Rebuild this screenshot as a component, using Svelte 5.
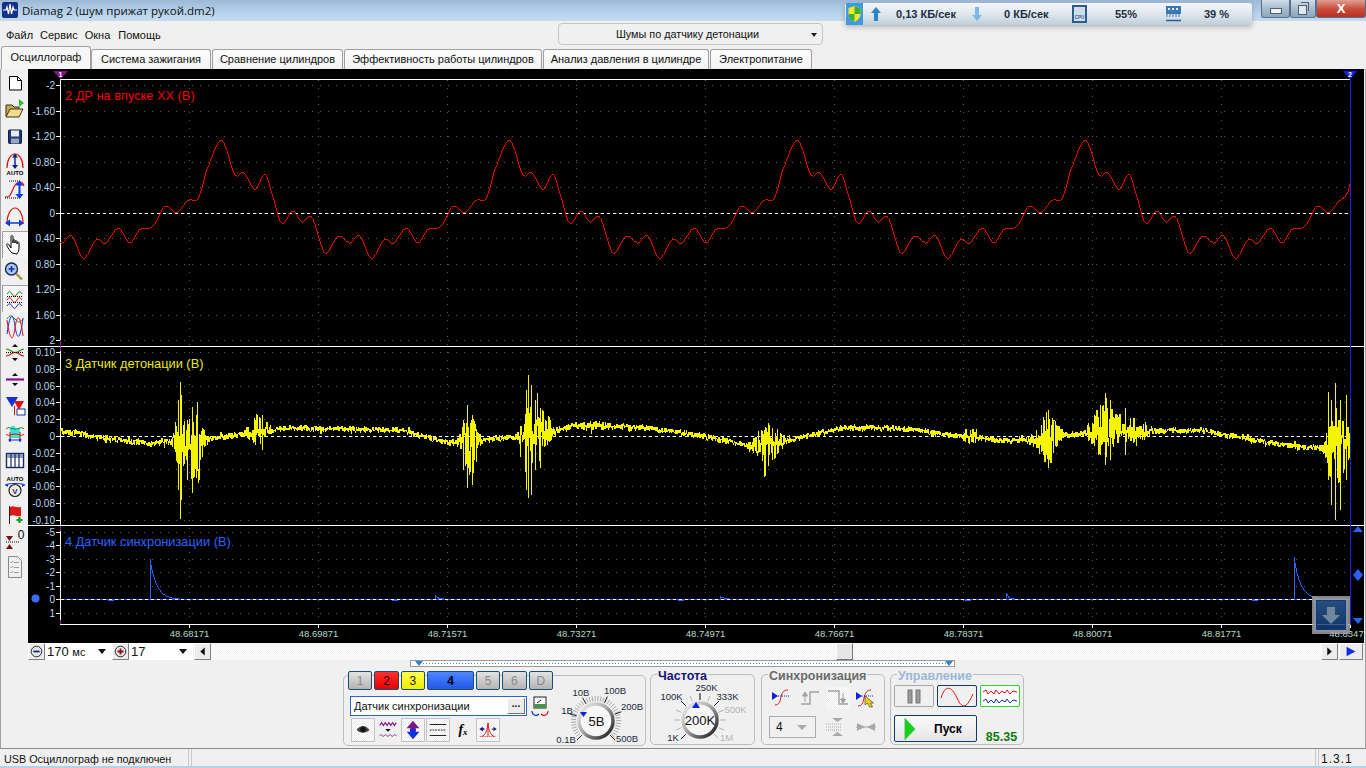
<script>
  const gridX = [189, 318, 447, 576, 705, 834, 963, 1092, 1221];
  const xLabels = ['48.68171','48.69871','48.71571','48.73271','48.74971','48.76671','48.78371','48.80071','48.81771','48.8347'];
  const t1 = ['-2','-1.60','-1.20','-0.80','-0.40','0','0.40','0.80','1.20','1.60','2'].map((l,i)=>({l,y:Math.round(85+i*25.5)}));
  const t2 = ['0.10','0.08','0.06','0.04','0.02','0','-0.02','-0.04','-0.06','-0.08','-0.10'].map((l,i)=>({l,y:Math.round(352+i*16.75)}));
  const t3 = ['-5','-4','-3','-2','-1','0','1'].map((l,i)=>({l,y:Math.round(531.5+i*13.5)}));
  const ticks = [...t1, ...t2, ...t3];

  const key = [[71.7,235.7],[83.3,258.3],[96.7,239.3],[105,243.3],[118.3,228.3],[130,242.7],[140,229.3],[153.3,226],[165,206],[176.7,212.3],[188.3,200],[198.3,198.3],[206.7,170],[220,140.7],[226.7,150],[233.3,171.7],[238,175.7],[243.3,172.3],[255,189],[265,174.3],[271.7,193.3],[281.7,223.3],[292.7,210.7],[301.7,221.7],[311.7,217.3],[325,252.7],[338.3,236],[350,242.7]];
  function cr(p0,p1,p2,p3,t){return 0.5*(2*p1+(p2-p0)*t+(2*p0-5*p1+4*p2-p3)*t*t+(3*p1-p0-3*p2+p3)*t*t*t);}
  function redY(x){
    const P=288; const n=key.length;
    let u=((x-71.7)%P+P)%P+71.7;
    let i=n-1;
    for(let k=0;k<n-1;k++){ if(u>=key[k][0]&&u<key[k+1][0]){i=k;break;} }
    const k0=key[(i-1+n)%n],k1=key[i],k2=key[(i+1)%n],k3=key[(i+2)%n];
    const x2=i===n-1?k2[0]+P:k2[0];
    const t=(u-k1[0])/(x2-k1[0]);
    return cr(k0[1],k1[1],k2[1],k3[1],t);
  }
  let red=''; for(let x=60;x<=1342;x++){ red+=`${x},${Math.round(redY(x))} `; }
  red+='1345,197 1348,192 1350,184';

  let seed=12345;
  function rnd(){ seed|=0; seed=seed+0x6D2B79F5|0; let t=Math.imul(seed^seed>>>15,1|seed); t=t+Math.imul(t^t>>>7,61|t)^t; return ((t^t>>>14)>>>0)/4294967296; }
  const cp=[[60,431],[150,444],[180,440],[215,438],[290,428],[400,430],[450,443],[480,441],[500,438],[530,436],[575,426],[640,427],[700,435],[750,446],[790,440],[840,428],[900,428],[960,436],[1010,441],[1050,437],[1100,432],[1200,430],[1260,441],[1310,448],[1350,445]];
  function center(x){ for(let i=0;i<cp.length-1;i++){ if(x<=cp[i+1][0]){ const a=cp[i],b=cp[i+1]; return a[1]+(b[1]-a[1])*(x-a[0])/(b[0]-a[0]); } } return 445; }
  const bursts=[[180,6,36,44],[192,12,28,42],[258,12,20,12],[470,9,30,38],[528,7,42,44],[540,12,28,30],[590,28,6,5],[768,15,20,22],[970,10,9,8],[1048,13,26,28],[1105,15,34,28],[1135,14,16,16],[1335,8,42,48],[1345,9,30,44]];
  let yel='', sgn=1;
  for(let x=60;x<=1350;x+=0.5){
    let up=3,dn=3.4;
    for(const [c,w,u,d] of bursts){ const g=Math.exp(-(((x-c)/w)**2)); up=Math.max(up,u*g); dn=Math.max(dn,d*g); }
    if(rnd()<0.7) sgn=-sgn;
    const m=rnd()**1.15;
    const spiky=rnd()<0.05?1.7:1;
    const y=center(x)+(sgn<0?-up:dn)*m*spiky;
    yel+=`${x},${Math.round(y)} `;
  }
  const spikes=[[180,382,519],[181,395,500],[178,400,490],[192,407,493],[187,420,480],[196,415,478],[467,405,488],[472,415,485],[463,420,470],[528,375,498],[526,390,490],[531,385,495],[535,400,470],[540,408,468],[768,423,466],[764,430,462],[772,428,460],[1048,410,468],[1044,420,462],[1105,393,465],[1100,405,455],[1110,400,460],[1125,408,455],[1335,383,520],[1328,392,480],[1331,400,505],[1340,400,510],[1346,395,480],[262,415,450],[255,420,445]];
  const spikePath=spikes.map(([x,a,b])=>`M${x+0.5} ${a}V${b}`).join('');

  function spike(x0,top,tau){ let s=`${x0},599 ${x0},${top} `; for(let x=x0+1;x<x0+36;x++){ s+=`${x},${Math.round(599-(599-top)*Math.exp(-(x-x0)/tau))} `; } return s; }
  const blue1=spike(150,559,6.5), blue2=spike(1294,557,6.5);
  const bumps=[[435,3],[720,2],[1006,5]];
  const dips=[108,392,678,965,1252];

  function knobTicks(cx,cy,r1,r2,step){ const a=[]; for(let d=-135;d<=135;d+=step){ const q=d*Math.PI/180; a.push({x1:cx+r1*Math.sin(q),y1:cy-r1*Math.cos(q),x2:cx+r2*Math.sin(q),y2:cy-r2*Math.cos(q)}); } return a; }
  function major(cx,cy,list,r1,r2){ return list.map(d=>{const q=d*Math.PI/180; return {x1:cx+r1*Math.sin(q),y1:cy-r1*Math.cos(q),x2:cx+r2*Math.sin(q),y2:cy-r2*Math.cos(q)};}); }
  const k1t=knobTicks(596,721,20,25,7);
  const k1m=major(596,721,[-135,-75,-30,25,70,135],20,27);
  const k2t=knobTicks(701,721,20,26,22.5);
  const k2m=major(701,721,[-135,-45,0,45],20,27);
  const tabs=['Система зажигания','Сравнение цилиндров','Эффективность работы цилиндров','Анализ давления в цилиндре','Электропитание'];
  const tabW=[120,131,198,166,102];
</script>

<div class="app">
  <header class="title">
    <svg class="appicon" viewBox="0 0 16 16"><rect width="16" height="16" rx="2" fill="#12308c"/><path d="M1 8h3l1-3 1.500 7 1.500-10 1.500 10 1.500-7 1 3h3" fill="none" stroke="#fff" stroke-width="1.200"/></svg>
    <span class="ttext">Diamag 2 (шум прижат рукой.dm2)</span>
    <div class="winbtns">
      <div class="wb wmin"><span class="dash"></span></div>
      <div class="wb wmax"><span class="sq"></span><span class="sq back"></span></div>
      <div class="wb wclose">X</div>
    </div>
  </header>

  <div class="tray">
    <svg viewBox="0 0 17 22" class="shield"><rect width="17" height="22" fill="#3f9ae0"/><path d="M8.500 3l6 2v6c0 4-3 6-6 8-3-2-6-4-6-8V5z" fill="#f7e92a"/><path d="M8.500 3v8h6V5zM8.500 11v8c-3-2-6-4-6-8z" fill="#3cb03c"/></svg>
    <svg viewBox="0 0 10 16" class="arr"><path d="M5 1l5 6H7v8H3V7H0z" fill="#2a84c8"/></svg>
    <span>0,13 КБ/сек</span>
    <svg viewBox="0 0 12 16" class="arr wide"><path d="M4 1h4v8h3l-5 6-5-6h3z" fill="#7ab8e8"/></svg>
    <span>0 КБ/сек</span>
    <svg viewBox="0 0 15 18" class="cpu"><rect x="1" y="1" width="13" height="16" fill="#cfdde9" stroke="#2a5c94" stroke-width="2"/><text x="7.500" y="14" font-size="4.500" text-anchor="middle" fill="#2a5c94" font-weight="700">CPU</text></svg>
    <span>55%</span>
    <svg viewBox="0 0 15 18" class="cpu"><rect x="0" y="1" width="15" height="8" fill="#3a78b4"/><path d="M2 3h2v2H2zM6 3h2v2H6zM10 3h2v2h-2z" fill="#dbe8f2"/><path d="M1 9v3M4 9v3M7 9v3M10 9v3M13 9v3" stroke="#3a78b4"/><path d="M0 15.500h15" stroke="#2a5c94" stroke-width="1.500"/></svg>
    <span>39 %</span>
  </div>

  <div class="menurow">
    <nav class="menu"><span>Файл</span><span>Сервис</span><span>Окна</span><span>Помощь</span></nav>
    <div class="combo"><span>Шумы по датчику детонации</span><i></i></div>
  </div>

  <div class="tabs">
    <div class="tab active">Осциллограф</div>
    {#each tabs as t,i}<div class="tab" style="width:{tabW[i]}px">{t}</div>{/each}
  </div>

  <div class="frame">
    <div class="main">
      <aside class="tools">
        <svg viewBox="0 0 27 27"><path d="M8.500 7.500h8l4 4v9.500h-12z" fill="#fff" stroke="#000"/><path d="M16.500 7.500v4h4" fill="none" stroke="#000"/></svg>
        <svg viewBox="0 0 27 27"><path d="M5 20V9h6l2 2h5v2" fill="#c8a850" stroke="#3c3010"/><path d="M5 21l4-8h13l-4 8z" fill="#f2dc8a" stroke="#3c3010"/><path d="M18 3l5 4-5 4z" fill="#2fc02f"/></svg>
        <svg viewBox="0 0 27 27"><rect x="7.500" y="7" width="13" height="13.500" rx="1" fill="#23386e" stroke="#0f1c44"/><rect x="10" y="7.500" width="8" height="6" fill="#e8edf5"/><rect x="10" y="15.500" width="8" height="5" fill="#9aa7c2"/></svg>
        <svg viewBox="0 0 27 27"><path d="M6 18c0-9 4-14 8-14s8 5 8 14" fill="none" stroke="#e01010" stroke-width="1.200"/><path d="M14 5v13" stroke="#0a1a8a" stroke-width="1.400"/><path d="M14 3.500l3 4h-6zM14 19l3-4h-6z" fill="#0a1a8a"/><text x="14" y="25" class="tiny">AUTO</text></svg>
        <svg viewBox="0 0 27 27"><path d="M4 20c5 0 5-1 8-8 2-5 4-7 7-7s3 2 4 4" fill="none" stroke="#e01010" stroke-width="1.200"/><path d="M8 4h12M4 21h14" stroke="#000" stroke-dasharray="1 1"/><path d="M18.500 7v11" stroke="#0a3ae0" stroke-width="2"/><path d="M18.500 3.500l4 5h-8zM18.500 22l4-5h-8z" fill="#0a3ae0"/></svg>
        <svg viewBox="0 0 27 27"><path d="M6 20c0-10 4-16 8-16s8 6 8 16" fill="none" stroke="#e01010" stroke-width="1.200"/><path d="M7 19h14" stroke="#0a3ae0" stroke-width="1.500"/><path d="M4 19l5-3.500v7zM23 19l-5-3.500v7z" fill="#0a3ae0"/></svg>
        <div class="press"><svg viewBox="0 0 27 27"><path d="M11 22c-2-2-4-5-5-7-1-2 1-3 2-1l2 3V6c0-2 2-2 2 0v6-2c0-2 2-2 2 0v2-1c0-2 2-2 2 0v2-1c0-2 2-1 2 0v5c0 3-1 4-2 6z" fill="#fff" stroke="#000"/></svg></div>
        <svg viewBox="0 0 27 27"><circle cx="10.500" cy="11" r="6" fill="#a8c8f0" stroke="#1a2a50" stroke-width="1.400"/><path d="M7.500 11h6M10.500 8v6" stroke="#12309a" stroke-width="1.600"/><path d="M15 15.500l6 6" stroke="#a89040" stroke-width="2.400"/></svg>
        <div class="press"><svg viewBox="0 0 27 27"><path d="M6 9c2-3 3-3 5 0s3 3 5 0 3-3 5 0" fill="none" stroke="#109010"/><path d="M6 15c2-3 3-3 5 0s3 3 5 0 3-3 5 0" fill="none" stroke="#e01010"/><path d="M6 21c2-3 3-3 5 0s3 3 5 0 3-3 5 0" fill="none" stroke="#1030e0"/><path d="M6 11.500h16M6 17.500h16" stroke="#000" stroke-dasharray="1 1"/></svg></div>
        <svg viewBox="0 0 27 27"><path d="M6 7c3-4 4-4 8 0s5 4 8 0" fill="none" stroke="#109010"/><path d="M6 22c3-22 6-22 8-8s5 16 8-8" fill="none" stroke="#1030e0"/><path d="M6 8c3 22 6 22 8 8s5-16 8 8" fill="none" stroke="#e01010"/></svg>
        <svg viewBox="0 0 27 27"><path d="M5 10c4 0 5 3 9 3.500s5-3.500 9-3.500" fill="none" stroke="#109010" stroke-width="1.200"/><path d="M5 17c4 0 5-3 9-3.500s5 3.500 9 3.500" fill="none" stroke="#e01010" stroke-width="1.200"/><path d="M5 13.500h18" stroke="#000" stroke-dasharray="1 1"/><path d="M14 5l3 3h-6zM14 22l3-3h-6z" fill="#000"/></svg>
        <svg viewBox="0 0 27 27"><path d="M5 13.500h18" stroke="#80148a" stroke-width="2.200"/><path d="M14 7l3 3h-6zM14 20l3-3h-6z" fill="#111"/></svg>
        <svg viewBox="0 0 27 27"><path d="M5 4h12l-6 10z" fill="#1030e0"/><path d="M13 8h10l-5 9z" fill="#e01010"/><path d="M13.500 13v9" stroke="#e01010"/><rect x="16" y="16" width="8" height="6" fill="#fff" stroke="#12309a"/></svg>
        <svg viewBox="0 0 27 27"><path d="M9 8c3-3 4-3 5-1s2 2 5 1v10H9z" fill="#3ee0d8"/><path d="M5 9c3-3 4 0 9 0s6-3 9 0" fill="none" stroke="#109010"/><path d="M5 14c3 3 4 0 9 0s6 3 9 0" fill="none" stroke="#e01010"/><path d="M9 12v10M19 12v10" stroke="#e01010"/><path d="M9 20h10" stroke="#1030e0"/><path d="M7 20l3-2v4zM21 20l-3-2v4z" fill="#1030e0"/></svg>
        <svg viewBox="0 0 27 27"><rect x="5.500" y="6.500" width="17" height="14" fill="#fff" stroke="#1a2a60" stroke-width="1.400"/><rect x="6" y="7" width="16" height="4" fill="#8f9fc0"/><path d="M10 7v13M14 7v13M18 7v13" stroke="#1a2a60" stroke-width="1.200"/></svg>
        <svg viewBox="0 0 27 27"><text x="14" y="7" class="tiny">AUTO</text><circle cx="14" cy="16.500" r="6" fill="#ececec" stroke="#222" stroke-width="1.200"/><text x="14" y="19.500" class="tinyv">V</text><path d="M4 11c3-2 17-2 20 0" fill="none" stroke="#1030e0"/><path d="M4 11l3-1v3zM24 11l-3-1v3z" fill="#1030e0"/></svg>
        <svg viewBox="0 0 27 27"><path d="M8.500 5v18" stroke="#222"/><path d="M9 6c4-2 5 1 11 0v9c-5 1-7-2-11 0z" fill="#e01818"/><path d="M15.500 19h6M18.500 16v6" stroke="#1a9a1a" stroke-width="2.200"/></svg>
        <svg viewBox="0 0 27 27"><path d="M5 14h13M5 14" stroke="#000" stroke-dasharray="1 1"/><path d="M5 8h7l-3.500 5zM5 21h7l-3.500-5z" fill="#7c1010"/><text x="20" y="11" class="zero">0</text></svg>
        <svg viewBox="0 0 27 27"><path d="M7.500 1.500h9l4 4v17h-13z" fill="#f0f0f0" stroke="#888"/><path d="M9.500 7l1 1 1.500-2M9.500 12l1 1 1.500-2M9.500 17l1 1 1.500-2M13 7.500h5M13 12.500h5M13 17.500h5" fill="none" stroke="#999"/></svg>
      </aside>

      <svg class="scope" viewBox="28 69 1336 574" width="1336" height="574">
        <rect x="28" y="69" width="1336" height="574" fill="#000"/>
        <g stroke="#5e5e5e" stroke-dasharray="1 7">
          {#each ticks as t}<line x1="64" x2="1350" y1={t.y+0.5} y2={t.y+0.5}/>{/each}
          {#each gridX as x}<line x1={x+0.5} x2={x+0.5} y1="80" y2="624"/>{/each}
        </g>
        <g stroke="#fff">
          <line x1="60" x2="1350" y1="79.500" y2="79.500"/>
          <line x1="28" x2="1364" y1="346.500" y2="346.500"/>
          <line x1="28" x2="1364" y1="525.500" y2="525.500"/>
          <line x1="60" x2="1350" y1="624.500" y2="624.500"/>
          <line x1="60.500" x2="60.500" y1="79" y2="624"/>
          {#each ticks as t}<line x1="56" x2="60" y1={t.y+0.5} y2={t.y+0.5}/>{/each}
          {#each [...gridX,1350] as x}<line x1={x+0.5} x2={x+0.5} y1="625" y2="628"/>{/each}
        </g>
        <path d="M60.500 340v11M60.500 526v5M60.500 620v4" stroke="#9a1a9a"/>
        <line x1="1350.500" x2="1350.500" y1="79" y2="625" stroke="#1020f0"/>
        <line x1="61" x2="1350" y1="213.500" y2="213.500" stroke="#fff" stroke-dasharray="3 3"/>
        <line x1="61" x2="1350" y1="436.500" y2="436.500" stroke="#fff" stroke-dasharray="3 3"/>
        <polyline points={red} fill="none" stroke="#f00000" shape-rendering="crispEdges"/>
        <polyline points={yel} fill="none" stroke="#f5f500" shape-rendering="crispEdges"/>
        <path d={spikePath} fill="none" stroke="#f5f500" shape-rendering="crispEdges"/>
        <line x1="61" x2="1350" y1="599.500" y2="599.500" stroke="#2a62ff"/>
        <polyline points={blue1} fill="none" stroke="#2a62ff" shape-rendering="crispEdges"/>
        <polyline points={blue2} fill="none" stroke="#2a62ff" shape-rendering="crispEdges"/>
        {#each bumps as [b,h]}<path d="M{b}.500 599v-{h}l3 {h-1}l5 1" fill="none" stroke="#2a62ff" shape-rendering="crispEdges"/>{/each}
        <line x1="61" x2="1350" y1="599.500" y2="599.500" stroke="#fff" stroke-dasharray="3 3"/>
        {#each dips as d}<path d="M{d} 600.500h6" stroke="#2a62ff"/>{/each}

        <text x="65" y="100" class="ptitle" fill="#f00000">2 ДР на впуске ХХ (В)</text>
        <text x="65" y="368" class="ptitle" fill="#e8e800">3 Датчик детонации (В)</text>
        <text x="65" y="546" class="ptitle" fill="#2a62ff">4 Датчик синхронизации (В)</text>
        {#each ticks as t}<text x="55" y={t.y+3.5} class="ylab">{t.l}</text>{/each}
        {#each xLabels as l,i}<text x={i===9?1346.5:189.5+i*129} y="637" class="xlab">{l}</text>{/each}
        <circle cx="35.500" cy="598.500" r="4" fill="#3c6cff"/>
        <path d="M53 71h15l-7.500 8.500z" fill="#80148a"/>
        <text x="60.500" y="77" class="mk">1</text>
        <path d="M1343 71h14l-7 8.500z" fill="#1020f0"/>
        <text x="1350" y="77" class="mk">2</text>
        <path d="M1358 526l5 6h-10zM1358 569l5 6-5 6-5-6zM1353 618h10l-5 6z" fill="#2a62ff"/>
        <defs><linearGradient id="ov" x1="0" y1="0" x2="0" y2="1"><stop offset="0" stop-color="#2e6098"/><stop offset="1" stop-color="#123a78"/></linearGradient></defs>
        <rect x="1314" y="598" width="34" height="34" fill="url(#ov)" fill-opacity="0.85" stroke="#a8a8a8" stroke-opacity="0.8" stroke-width="4"/>
        <rect x="1316.500" y="600.500" width="29" height="29" fill="none" stroke="#123a80"/>
        <path d="M1327 607h8v8h5l-9 9-9-9h5z" fill="#71879c"/>
      </svg>
    </div>

    <div class="scrollrow">
      <button class="sb"><svg viewBox="0 0 17 17"><circle cx="8.500" cy="8.500" r="6" fill="#e8e8e8" stroke="#111"/><path d="M5 8.500h7" stroke="#12208a" stroke-width="2"/></svg></button>
      <div class="dd w1"><span>170 <small>мс</small></span><i></i></div>
      <button class="sb"><svg viewBox="0 0 17 17"><circle cx="8.500" cy="8.500" r="6" fill="#e8e8e8" stroke="#111"/><path d="M5 8.500h7M8.500 5v7" stroke="#8a1212" stroke-width="2"/></svg></button>
      <div class="dd w2"><span>17</span><i></i></div>
      <button class="sb lb"><svg viewBox="0 0 17 17"><path d="M11 4v9L6 8.500z" fill="#000"/></svg></button>
      <div class="track"><div class="thumb"></div></div>
      <button class="sb"><svg viewBox="0 0 17 17"><path d="M6 4v9l5-4.500z" fill="#000"/></svg></button>
      <button class="sb play"><svg viewBox="0 0 24 17"><path d="M7 3v11l10-5.500z" fill="#1030e0"/></svg></button>
    </div>

    <div class="sliderrow">
      <div class="slider">
        <svg viewBox="0 0 543 6" width="543" height="6"><line x1="6" x2="540" y1="3.500" y2="3.500" stroke="#3a90e8" stroke-dasharray="1 2"/><path d="M4 1h8l-4 5zM534 1h8l-4 5z" fill="#3a80d8"/></svg>
      </div>
    </div>

    <div class="panels">
      <section class="g1">
        <div class="g1left">
          <div class="chans">
            <button class="ch off">1</button>
            <button class="ch red">2</button>
            <button class="ch yel">3</button>
            <button class="ch blu">4</button>
            <button class="ch off">5</button>
            <button class="ch off">6</button>
            <button class="ch off">D</button>
          </div>
          <div class="inrow">
            <div class="inp"><span>Датчик синхронизации</span><b>...</b></div>
            <svg viewBox="0 0 18 20" width="18" height="20"><rect x="3" y="1" width="12" height="11" fill="#fff" stroke="#222"/><rect x="3" y="8" width="12" height="4" fill="#4a9050"/><path d="M6 7l4-3" stroke="#111"/><path d="M1 15a4 4 0 0 0 7 3" fill="none" stroke="#1030b0" stroke-width="1.200"/><path d="M17 15a4 4 0 0 1-7 3" fill="none" stroke="#e01010" stroke-width="1.200"/></svg>
          </div>
          <div class="mini">
            <div class="mb on"><svg viewBox="0 0 24 24"><path d="M5 12c4-6 10-6 14 0-4 4-10 4-14 0z" fill="#444"/><circle cx="12" cy="11.500" r="3" fill="#111"/></svg></div>
            <div class="mb"><svg viewBox="0 0 24 24"><path d="M3 7l2-3 2 3 2-3 2 3 2-3 2 3 2-3 2 3 2-3" fill="none" stroke="#80148a" stroke-width="1.200"/><path d="M3 18c2-3 3 3 5 0s3 3 5 0 3 3 5 0 3 2 3 0" fill="none" stroke="#80148a"/><path d="M9 11h6l-3 3z" fill="#111"/></svg></div>
            <div class="mb on"><svg viewBox="0 0 24 24"><path d="M12 2l7 8h-4v3H9v-3H5z" fill="#80148a"/><path d="M12 22l7-8h-4v-3H9v3H5z" fill="#1030e0"/></svg></div>
            <div class="mb on"><svg viewBox="0 0 24 24"><path d="M3 6h18M3 18h18" stroke="#111"/><path d="M3 12h18" stroke="#111" stroke-dasharray="2 1"/></svg></div>
            <div class="mb fx"><i>f</i><i class="x">x</i></div>
            <div class="mb on"><svg viewBox="0 0 24 24"><path d="M3 19h18" stroke="#e01010" stroke-dasharray="1 1"/><path d="M5 19c4-1 6-6 7-14 1 8 3 13 7 14" fill="none" stroke="#e01010"/><path d="M12 4v15" stroke="#e01010"/><path d="M3 11h5M16 11h5" stroke="#12208a"/><path d="M3 11l3-2.500v5zM8 11l-2-2v4zM21 11l-3-2.500v5z" fill="#12208a"/></svg></div>
          </div>
        </div>
        <svg class="knob1" viewBox="553 676 92 70" width="92" height="70">
          <defs><linearGradient id="kg" x1="0" y1="0" x2="1" y2="1"><stop offset="0" stop-color="#f4f4f4"/><stop offset="0.45" stop-color="#aaa"/><stop offset="1" stop-color="#111"/></linearGradient></defs>
          {#each k1t as t}<line x1={t.x1} y1={t.y1} x2={t.x2} y2={t.y2} stroke="#a8a8a8"/>{/each}
          {#each k1m as t}<line x1={t.x1} y1={t.y1} x2={t.x2} y2={t.y2} stroke="#222"/>{/each}
          <circle cx="596" cy="721" r="17" fill="#f6f6f6" stroke="url(#kg)" stroke-width="3.500"/>
          <text x="596.500" y="725.500" class="kv">5В</text>
          <path d="M580 712h7l-3.500 5z" fill="#1020e0"/>
          <text x="566" y="743" class="kl">0.1В</text>
          <text x="567" y="714" class="kl">1В</text>
          <text x="581" y="696" class="kl">10В</text>
          <text x="615" y="694" class="kl">100В</text>
          <text x="632" y="710" class="kl">200В</text>
          <text x="627" y="742" class="kl">500В</text>
        </svg>
      </section>

      <fieldset class="g2">
        <legend class="lg-navy">Частота</legend>
        <svg viewBox="652 682 102 62" width="102" height="62">
          {#each k2t as t}<line x1={t.x1} y1={t.y1} x2={t.x2} y2={t.y2} stroke="#b4b4b4"/>{/each}
          {#each k2m as t}<line x1={t.x1} y1={t.y1} x2={t.x2} y2={t.y2} stroke="#222"/>{/each}
          <circle cx="701" cy="721" r="17" fill="#f6f6f6" stroke="url(#kg)" stroke-width="3.500"/>
          <text x="701" y="725.500" class="kv">200K</text>
          <path d="M697 703l4 6h-8z" fill="#1020e0"/>
          <text x="674" y="742" class="kl">1K</text>
          <text x="672.500" y="701" class="kl">100K</text>
          <text x="707.500" y="692" class="kl">250K</text>
          <text x="728.500" y="701" class="kl">333K</text>
          <text x="736.500" y="714" class="kl dim">500K</text>
          <text x="727.500" y="742" class="kl dim">1M</text>
        </svg>
      </fieldset>

      <fieldset class="g3">
        <legend class="lg-gray">Синхронизация</legend>
        <div class="syncgrid">
          <svg viewBox="0 0 22 22" width="22" height="22"><path d="M5 18c4 0 5-3 6-8s3-7 7-7" fill="none" stroke="#e01010"/><path d="M2 9h18" stroke="#1020e0" stroke-dasharray="1 1"/><path d="M2 5v8l6-4z" fill="#1020e0"/></svg>
          <svg viewBox="0 0 22 22" width="22" height="22"><path d="M2 17h9V5h9" fill="none" stroke="#a0a0a0" stroke-width="1.400"/><path d="M6 6v9M3.500 9L6 5l2.500 4z" stroke="#a0a0a0" fill="#a0a0a0"/></svg>
          <div class="ddit"><svg viewBox="0 0 24 22" width="24" height="22"><path d="M2 4h11v13h9" fill="none" stroke="#a0a0a0" stroke-width="1.400"/><path d="M17 6v9M14.500 12L17 16l2.500-4z" stroke="#a0a0a0" fill="#a0a0a0"/></svg></div>
          <svg viewBox="0 0 22 22" width="22" height="22"><path d="M3 19c4 0 5-3 6-8s3-8 7-8" fill="none" stroke="#e01010"/><path d="M1 9h18" stroke="#1020e0" stroke-dasharray="1 1"/><path d="M1 5v8l6-4z" fill="#1020e0"/><path d="M10 9v9l2.500-2 2 4h3l-2-4h3z" fill="#f0d010" stroke="#333" stroke-width="0.600"/></svg>
          <div class="sel"><span>4</span><i></i></div>
          <svg viewBox="0 0 22 22" width="22" height="22"><path d="M2 8h16M2 11h16M2 14h16" stroke="#a8a8a8" stroke-dasharray="1 1"/><path d="M8 2h11l-5.500 4zM8 20h11l-5.500-4z" fill="#a8a8a8"/></svg>
          <svg viewBox="0 0 22 22" width="22" height="22"><path d="M2 7l8 4-8 4zM20 7l-8 4 8 4z" fill="#a8a8a8"/><path d="M1 11h20" stroke="#a8a8a8"/></svg>
        </div>
      </fieldset>

      <fieldset class="g4">
        <legend class="lg-blue">Управление</legend>
        <div class="ctrl">
          <button class="cb pause"><svg viewBox="0 0 20 16" width="20" height="16"><rect x="4" y="2" width="4" height="13" fill="#9a9a9a" stroke="#777"/><rect x="12" y="2" width="4" height="13" fill="#9a9a9a" stroke="#777"/></svg></button>
          <button class="cb sine"><svg viewBox="0 0 36 20" width="36" height="20"><path d="M2 12c4-13 10-13 16 0s10 9 16-4" fill="none" stroke="#e01010"/></svg></button>
          <button class="cb noise"><svg viewBox="0 0 38 20" width="38" height="20"><path d="M2 6l3-2 2 4 3-3 3 3 2-4 3 4 3-3 3 2 2-3 3 4 3-3 4 1" fill="none" stroke="#e01010"/><path d="M2 15l3-2 2 4 3-3 3 3 2-4 3 4 3-3 3 2 2-3 3 4 3-3 4 1" fill="none" stroke="#1030c0"/></svg></button>
          <button class="cb start"><svg viewBox="0 0 16 20" width="12" height="22" preserveAspectRatio="none"><path d="M1 0v20l14-10z" fill="#16d020" stroke="#60c060" stroke-width="0.500"/></svg><span>Пуск</span></button>
          <div class="val">85.35</div>
        </div>
      </fieldset>
    </div>
  </div>

  <footer class="status">
    <div class="p1">USB Осциллограф не подключен</div>
    <div class="p2"></div>
    <div class="p3">1.3.1</div>
  </footer>
  <div class="strip"></div>
</div>

<style>
  :global(body){margin:0;}
  .app{position:relative;width:1366px;height:768px;overflow:hidden;background:#f0f0f0;display:flex;flex-direction:column;font:11px "Liberation Sans",sans-serif;color:#111;}
  .title{height:21px;flex:none;display:flex;align-items:flex-start;background:linear-gradient(180deg,#9db9d6 0,#b7d2ea 60%,#c4dcef 100%);}
  .appicon{width:16px;height:16px;margin:2px 4px 0 2px;}
  .ttext{font:11.500px "Open Sans",sans-serif;line-height:21px;color:#111;}
  .winbtns{margin-left:auto;display:flex;height:18px;}
  .wb{position:relative;height:18px;box-sizing:border-box;border:1px solid #5a6f88;border-top:0;border-radius:0 0 3px 3px;background:linear-gradient(180deg,#d2dfeb,#a8bccf 50%,#8fa6bb);display:flex;align-items:center;justify-content:center;}
  .wmin{width:29px;}
  .wmax{width:26px;}
  .wclose{width:50px;background:linear-gradient(180deg,#e0a090,#c84a3a 55%,#b83020);color:#fff;font:700 13px "Liberation Sans",sans-serif;}
  .dash{width:10px;height:4px;background:#eef3f8;border:1px solid #50606f;margin-top:5px;}
  .sq{width:7px;height:8px;background:#dfe8f0;border:1px solid #50606f;margin:2px 2px 0 0;}
  .sq.back{position:absolute;left:10px;top:2px;width:7px;height:8px;background:none;border-bottom:0;border-left:0;margin:0;}
  .tray{position:absolute;left:845px;top:3px;width:407px;height:22px;box-sizing:border-box;padding-left:1px;border-radius:3px;background:linear-gradient(180deg,#f4f7f9,#dfe7ed 50%,#c0ced9);box-shadow:0 2px 5px rgba(60,70,80,.35);display:grid;grid-template-columns:25px 25px 75px 33px 68px 43px 51px 38px 48px;align-items:center;font:700 11px "Liberation Sans",sans-serif;color:#1b2f44;white-space:nowrap;z-index:3;}
  .shield{width:17px;height:22px;}
  .arr{width:10px;height:16px;}
  .arr.wide{width:12px;}
  .cpu{width:15px;height:18px;}
  .menurow{height:25px;flex:none;display:flex;align-items:center;}
  .menu{display:flex;gap:7px;padding-left:6px;margin-top:2px;}
  .menu span:nth-child(4){margin-left:1px;}
  .combo{position:absolute;left:558px;top:23px;width:265px;height:22px;box-sizing:border-box;border:1px solid #c4c4c4;border-radius:4px;background:#f0f0f0;display:flex;align-items:center;justify-content:center;font-size:10.800px;padding-right:6px;}
  .combo i{position:absolute;right:5px;top:9px;border:3px solid transparent;border-top:4px solid #222;border-bottom:0;}
  .tabs{height:23px;flex:none;display:flex;align-items:flex-end;padding-left:1px;}
  .tab{box-sizing:border-box;height:20px;margin-right:1px;padding-bottom:2px;background:linear-gradient(180deg,#fdfdfd,#f1f1f1);border:1px solid #a0a0a0;border-bottom:0;border-radius:3px 3px 0 0;display:flex;align-items:center;justify-content:center;font-size:11px;white-space:nowrap;}
  .tab.active{width:90px;height:23px;background:#f6f6f6;padding-bottom:3px;margin-right:0;}
  .frame{height:680px;flex:none;box-sizing:border-box;border-left:1px solid #a0a0a0;border-right:1px solid #a0a0a0;border-bottom:1px solid #8a8a8a;display:flex;flex-direction:column;}
  .main{display:flex;height:574px;flex:none;}
  .tools{width:27px;flex:none;display:flex;flex-direction:column;}
  .tools svg{width:27px;height:27px;display:block;flex:none;}
  .press{height:27px;background:repeating-conic-gradient(#fff 0 25%,#ebebeb 0 50%) 0 0/2px 2px;border-top:1px solid #a0a0a0;border-left:1px solid #a0a0a0;box-sizing:border-box;margin-left:1px;}
  .press svg{margin:-1px 0 0 -2px;}
  .tiny{font:700 6px "Liberation Sans",sans-serif;text-anchor:middle;fill:#000;}
  .tinyv{font:700 8px "Liberation Sans",sans-serif;text-anchor:middle;fill:#333;}
  .zero{font:12px "Liberation Sans",sans-serif;text-anchor:middle;fill:#111;}
  .scope{display:block;flex:none;}
  .ptitle{font:12.800px "Liberation Sans",sans-serif;}
  .ylab{font:10px "Liberation Sans",sans-serif;fill:#bcd6ee;text-anchor:end;}
  .xlab{font:9.500px "Liberation Sans",sans-serif;fill:#b6dcc4;text-anchor:middle;}
  .mk{font:700 7px "Liberation Sans",sans-serif;fill:#fff;text-anchor:middle;}
  .scrollrow{height:17px;flex:none;display:flex;align-items:stretch;}
  .sb{width:17px;height:17px;padding:0;flex:none;box-sizing:border-box;border:1px solid;border-color:#fff #808080 #808080 #fff;background:#ececec;display:block;}
  .sb svg{display:block;width:15px;height:15px;}
  .scrollrow>.sb:first-child{margin-left:27px;}
  .dd{background:#fff;display:flex;align-items:center;justify-content:space-between;box-sizing:border-box;padding:0 6px 0 2px;font-size:13px;}
  .dd small{font-size:11px;}
  .dd i{border:4px solid transparent;border-top:5px solid #111;border-bottom:0;}
  .w1{width:67px;}
  .w2{width:64px;}
  .lb{margin-left:1px;}
  .track{width:1110px;position:relative;background:repeating-conic-gradient(#fff 0 25%,#f0f0f0 0 50%) 0 0/2px 2px;}
  .thumb{position:absolute;left:625px;top:0;width:17px;height:17px;box-sizing:border-box;background:#e6e6e6;border:1px solid;border-color:#fff #777 #777 #fff;}
  .play{width:24px;margin-left:1px;}
  .play svg{width:22px;}
  .sliderrow{height:7px;flex:none;padding-left:409px;}
  .slider{width:545px;height:7px;box-sizing:border-box;background:#fff;border:1px solid #9a9a9a;}
  .slider svg{display:block;margin-top:-1px;}
  .panels{display:flex;align-items:flex-start;padding-left:342px;height:80px;flex:none;}
  fieldset{box-sizing:border-box;height:78px;margin:0;padding:0;border:1px solid #bdbdbd;border-radius:5px;min-width:0;}
  legend{padding:0 1px;margin-left:6px;font:700 12.500px/14px "Liberation Sans",sans-serif;transform:translateY(2px);}
  .lg-navy{color:#14147a;}
  .lg-gray{color:#6a6a6a;}
  .lg-blue{color:#9db6d6;}
  .g1{box-sizing:border-box;width:303px;height:71px;margin-top:8px;border:1px solid #bdbdbd;border-radius:5px;display:flex;}
  .g1left{width:209px;flex:none;margin-top:-5px;}
  .chans{display:flex;gap:2px;padding-left:4px;}
  .ch{width:25px;height:19px;padding:0;box-sizing:border-box;border:1px solid #18506c;border-radius:2px;font:12px "Liberation Sans",sans-serif;color:#8a8a8a;background:linear-gradient(180deg,#e2e2e2,#b4b4b4);}
  .ch.red{background:linear-gradient(180deg,#ff3030,#e80000);color:#300;}
  .ch.yel{background:linear-gradient(180deg,#ffff50,#eeee00);color:#220;}
  .ch.blu{width:48px;background:linear-gradient(180deg,#4c86ff,#2458e8);color:#000;font-weight:700;}
  .inrow{display:flex;gap:4px;margin:6px 0 0 6px;align-items:center;}
  .inp{width:177px;height:20px;box-sizing:border-box;background:#fff;border:1px solid #2a62d8;display:flex;align-items:center;justify-content:space-between;padding-left:3px;font-size:11px;}
  .inp b{width:18px;height:16px;margin-right:1px;background:#ececec;border:1px solid;border-color:#fff #777 #777 #fff;box-sizing:border-box;font-size:10px;line-height:10px;text-align:center;}
  .mini{display:flex;margin:2px 0 0 7px;}
  .mb{width:24px;height:24px;box-sizing:border-box;display:flex;align-items:center;justify-content:center;margin-right:1px;}
  .mb svg{width:22px;height:22px;}
  .mb.on{background:repeating-conic-gradient(#fff 0 25%,#ebebeb 0 50%) 0 0/2px 2px;border:1px solid #c4c4c4;}
  .fx{font:italic 700 14px "Liberation Serif",serif;color:#000;}
  .fx .x{font-size:9px;margin-top:4px;}
  .knob1{flex:none;}
  .kl{font:9.500px "Liberation Sans",sans-serif;fill:#202a3a;text-anchor:middle;}
  .kl.dim{fill:#b4b4b4;}
  .kv{font:13px "Liberation Sans",sans-serif;text-anchor:middle;fill:#111;}
  .g2{width:105px;margin-left:4px;}
  .g2 svg{display:block;}
  .g3{width:124px;margin-left:6px;}
  .syncgrid{display:grid;grid-template-columns:29px 25px 31px 24px;grid-auto-rows:22px;row-gap:7px;margin:6px 0 0 8px;}
  .ddit{width:24px;height:22px;margin-left:2px;background:repeating-conic-gradient(#fff 0 25%,#ebebeb 0 50%) 0 0/2px 2px;}
  .ddit svg{display:block;}
  .sel{grid-column:1/3;width:47px;height:22px;margin-left:-1px;box-sizing:border-box;border:1px solid #aaa;display:flex;align-items:center;justify-content:space-between;padding:0 8px 0 6px;font-size:12px;}
  .sel i{border:5px solid transparent;border-top:5px solid #aaa;border-bottom:0;}
  .g4{width:134px;margin-left:5px;}
  .ctrl{display:grid;grid-template-columns:40px 40px 40px;column-gap:3px;row-gap:8px;margin:4px 0 0 3px;}
  .cb{height:22px;box-sizing:border-box;padding:0;background:#f0f0f0;border-radius:2px;display:flex;align-items:center;justify-content:center;}
  .pause{border:1px solid #a8a8a8;}
  .sine{border:1px solid #123a70;}
  .noise{border:1px solid #20e020;background:#fff;}
  .start{grid-column:1/3;height:27px;border:1px solid #123a70;justify-content:flex-start;padding-left:9px;background:linear-gradient(180deg,#fafafa,#e6e6e6);}
  .start span{font:700 12px "Liberation Sans",sans-serif;margin-left:18px;color:#000;}
  .val{align-self:end;text-align:center;font:700 12.500px "Liberation Sans",sans-serif;color:#0e7a0e;margin:0 0 -2px 3px;}
  .status{height:17px;flex:none;display:flex;background:#f0f0f0;}
  .status div{box-sizing:border-box;line-height:20px;white-space:nowrap;}
  .p1{width:189px;padding-left:4px;border-right:1px solid #c8c8c8;font-size:10.800px;}
  .p2{width:1125px;margin-left:2px;border-left:1px solid #c8c8c8;border-right:1px solid #c8c8c8;}
  .p3{flex:1;margin-left:2px;padding-left:2px;border-left:1px solid #c8c8c8;font-size:12px;letter-spacing:1px;}
  .strip{height:2px;flex:none;background:#b8d0e6;}
</style>
